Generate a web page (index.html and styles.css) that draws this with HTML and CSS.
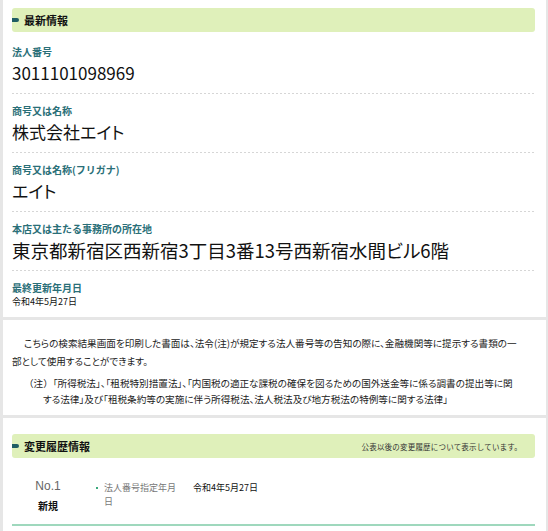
FILE: index.html
```html
<!DOCTYPE html>
<html lang="ja">
<head>
    <meta charset="UTF-8">
    <meta name="viewport" content="width=device-width, initial-scale=1.0">
    <title>法人番号公表サイト</title>
    <link rel="stylesheet" href="styles.css">
</head>
<body>

    <!-- 最新情報 -->
    <section class="card">
        <h2 class="band"><span class="band-title">最新情報</span></h2>

        <dl class="info-list">
            <div class="info-item">
                <dt>法人番号</dt>
                <dd class="value">3011101098969</dd>
            </div>
            <div class="info-item">
                <dt>商号又は名称</dt>
                <dd class="value">株式会社エイト</dd>
            </div>
            <div class="info-item">
                <dt>商号又は名称(フリガナ)</dt>
                <dd class="value">エイト</dd>
            </div>
            <div class="info-item">
                <dt>本店又は主たる事務所の所在地</dt>
                <dd class="value value-large">東京都新宿区西新宿3丁目3番13号西新宿水間ビル6階</dd>
            </div>
            <div class="info-item last">
                <dt>最終更新年月日</dt>
                <dd class="value-small">令和4年5月27日</dd>
            </div>
        </dl>
    </section>

    <!-- 注意書き -->
    <section class="card notice">
        <p class="notice-text">こちらの検索結果画面を印刷した書面は、法令(注)が規定する法人番号等の告知の際に、金融機関等に提示する書類の一<br>部として使用することができます。</p>
        <p class="notice-note"><span class="note-mark">（注）</span>「所得税法」、「租税特別措置法」、「内国税の適正な課税の確保を図るための国外送金等に係る調書の提出等に関<br>する法律」及び「租税条約等の実施に伴う所得税法、法人税法及び地方税法の特例等に関する法律」</p>
    </section>

    <!-- 変更履歴情報 -->
    <section class="card history">
        <h2 class="band">
            <span class="band-title">変更履歴情報</span>
            <span class="band-note">公表以後の変更履歴について表示しています。</span>
        </h2>

        <div class="history-row">
            <div class="history-no">
                <div class="no-num">No.1</div>
                <div class="no-kind">新規</div>
            </div>
            <ul class="history-items">
                <li>
                    <span class="item-label">法人番号指定年月日</span>
                    <span class="item-value">令和4年5月27日</span>
                </li>
            </ul>
        </div>
    </section>

</body>
</html>
```

FILE: styles.css
```css
/* Reset & base */
* {
    box-sizing: border-box;
    margin: 0;
    padding: 0;
}

body {
    font-family: "Noto Sans CJK JP", "Liberation Sans", sans-serif;
    background-color: #e6e6e6;
    color: #111;
    padding: 0 2px 0 3px;
}

/* Cards */
.card {
    background-color: #fff;
    padding: 8px 11px 0 9px;
    margin-bottom: 3px;
}

/* Green heading band */
.band {
    display: flex;
    align-items: center;
    justify-content: space-between;
    height: 24px;
    padding: 0 13px 0 0;
    background-color: #dff0ba;
    border-radius: 3px;
    font-weight: normal;
}

.band-title {
    display: flex;
    align-items: center;
    font-size: 11px;
    font-weight: bold;
    color: #111;
}

.band-title::before {
    content: "";
    width: 7px;
    height: 4px;
    margin-right: 5px;
    background-color: #1f5d63;
    border-radius: 0 2px 2px 0;
}

.band-note {
    font-size: 7.5px;
    letter-spacing: 0.2px;
    color: #333;
}

/* Latest info list */
.info-list {
    margin-top: 3px;
}

.info-item {
    padding: 10px 0 9px;
    background-image: linear-gradient(to right, #d6d6d6 2px, transparent 2px);
    background-size: 4px 1px;
    background-repeat: repeat-x;
    background-position: left bottom;
}

.info-item dt {
    font-size: 10px;
    line-height: 14px;
    font-weight: bold;
    color: #2a6f78;
}

.value {
    margin-top: 2px;
    font-size: 17px;
    line-height: 24px;
    font-feature-settings: "palt";
}

.value-large {
    font-size: 18.5px;
}

.info-item.last {
    padding: 9px 0 9px;
    background-image: none;
}

.info-item.last dt {
    line-height: 15px;
}

.value-small {
    font-size: 9px;
    line-height: 13px;
}

/* Notice */
.notice {
    padding: 14px 11px 8px 9px;
    font-size: 9.6px;
    color: #222;
}

.notice-text {
    line-height: 18px;
    text-indent: 12px;
    font-feature-settings: "palt";
    white-space: nowrap;
}

.notice-note {
    margin-top: 5px;
    padding-left: 31px;
    text-indent: -19px;
    line-height: 16px;
    font-feature-settings: "palt";
    white-space: nowrap;
}

.note-mark {
    font-feature-settings: normal;
}

/* History */
.history {
    padding-top: 16px;
    min-height: 120px;
}

.history-row {
    display: flex;
    margin-top: 19px;
    padding-bottom: 10px;
    border-bottom: 2px solid #9fd8bd;
}

.history-no {
    width: 72px;
    text-align: center;
}

.no-num {
    font-family: "Liberation Sans", sans-serif;
    font-size: 12px;
    line-height: 18px;
    color: #666;
}

.no-kind {
    margin-top: 3px;
    font-size: 10px;
    line-height: 16px;
    font-weight: bold;
}

.history-items {
    list-style: none;
    padding-top: 4px;
    padding-left: 12px;
}

.history-items li {
    display: flex;
    align-items: flex-start;
}

.history-items li::before {
    content: "";
    flex: none;
    width: 2px;
    height: 2px;
    margin-top: 6px;
    margin-right: 6px;
    background-color: #3aa97c;
}

.item-label {
    width: 76px;
    margin-right: 13px;
    font-size: 9px;
    line-height: 14px;
    color: #777;
}

.item-value {
    font-size: 9px;
    line-height: 14px;
    color: #111;
}
```
